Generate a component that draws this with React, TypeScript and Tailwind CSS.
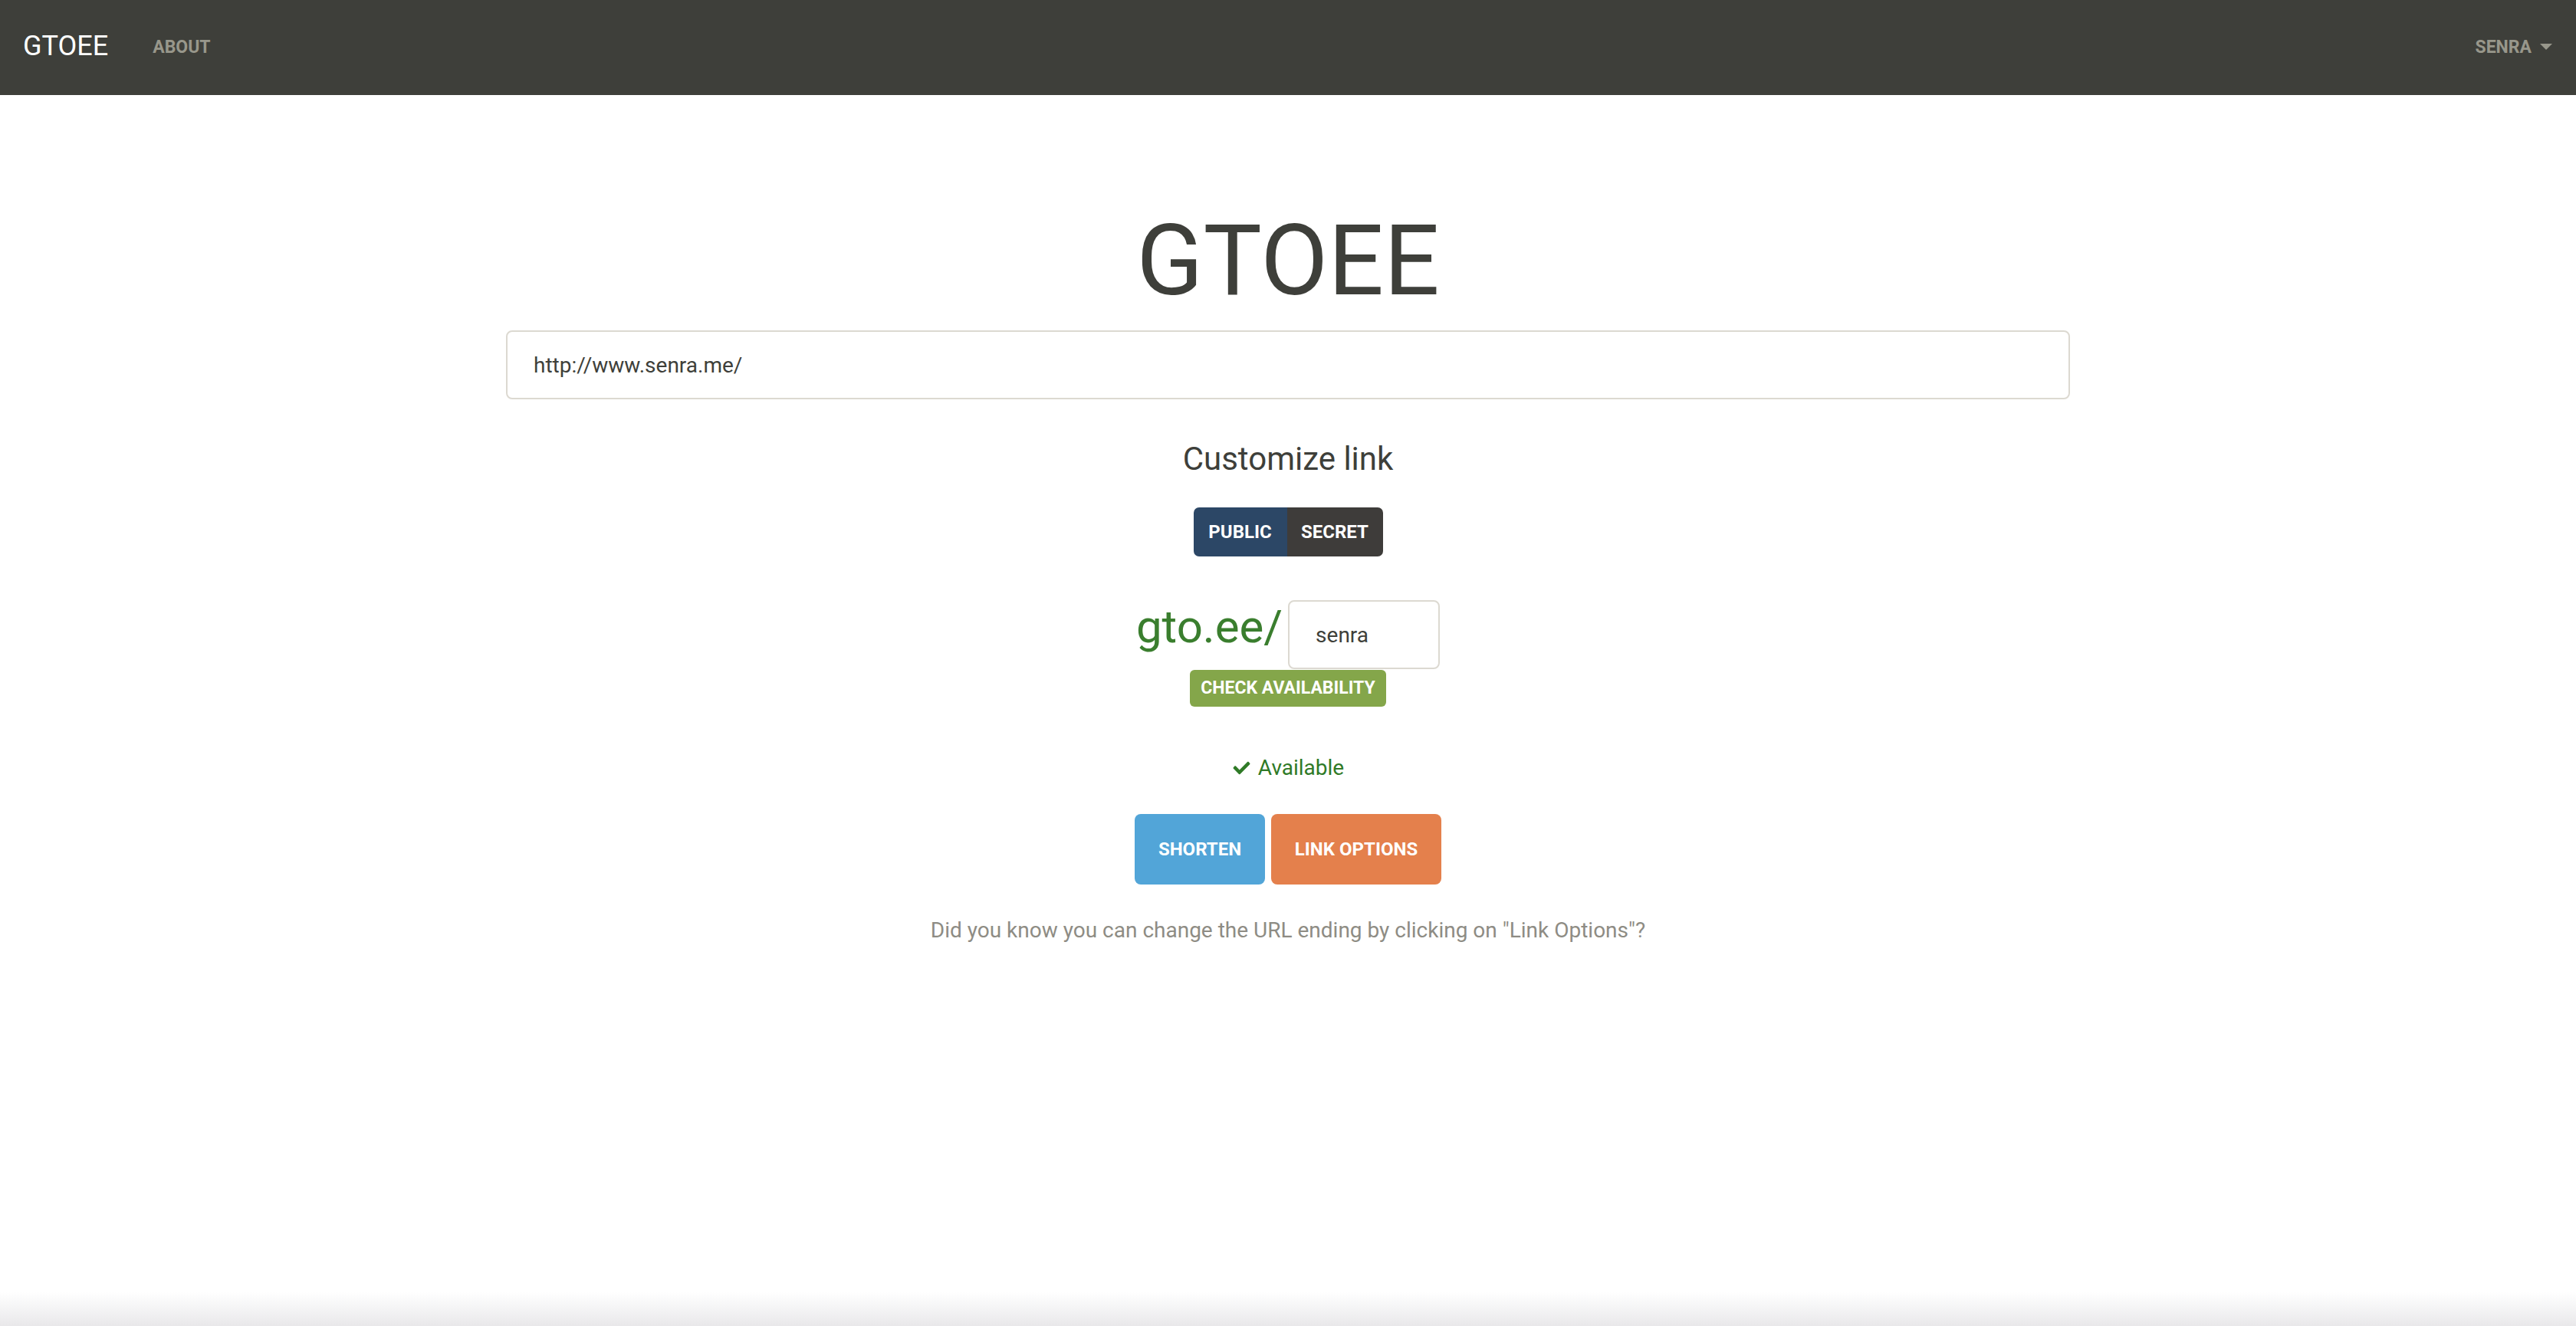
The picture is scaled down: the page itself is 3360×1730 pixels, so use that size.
import { FaCheck } from 'react-icons/fa';

function Navbar() {
  return (
    <nav className="h-[124px] bg-[#3e3f3a] flex items-center justify-between pl-[30px] pr-[31px] pb-[5px]">
      <div className="flex items-center gap-[58px]">
        <span className="text-[36px] leading-none text-white">GTOEE</span>
        <span className="text-[23px] font-bold leading-none text-[#98978b] pt-[3px]">ABOUT</span>
      </div>
      <div className="flex items-center gap-[11px] pt-[3px]">
        <span className="text-[23px] font-bold leading-none text-[#98978b]">SENRA</span>
        <span className="w-0 h-0 border-l-[8px] border-r-[8px] border-t-[8px] border-l-transparent border-r-transparent border-t-[#98978b]" />
      </div>
    </nav>
  );
}

export default function App() {
  return (
    <div className="min-h-screen flex flex-col bg-white font-[Roboto,sans-serif]">
      <Navbar />

      <main className="flex-1 flex flex-col items-center">
        <h1 className="mt-[152px] text-[128px] leading-none font-normal text-[#3e3f3a]">GTOEE</h1>

        <input
          readOnly
          defaultValue="http://www.senra.me/"
          className="mt-[27px] w-[2040px] h-[90px] pl-[34px] text-[28px] text-[#3e3f3a] bg-white border-2 border-[#dcd9d1] rounded-[8px] outline-none"
        />

        <h3 className="mt-[57px] text-[42px] leading-none font-normal text-[#3e3f3a]">Customize link</h3>

        {/* public / secret toggle */}
        <div className="mt-[42px] flex h-[64px] rounded-[7px] overflow-hidden">
          <button className="w-[122px] flex items-center justify-center bg-[#2c4766] text-white text-[24px] font-bold">
            PUBLIC
          </button>
          <button className="w-[125px] flex items-center justify-center bg-[#3e3c3a] text-white text-[24px] font-bold">
            SECRET
          </button>
        </div>

        <div className="mt-[57px] flex items-baseline gap-[7px]">
          <span className="text-[60px] leading-none text-[#3a7e2e]">gto.ee/</span>
          <input
            readOnly
            defaultValue="senra"
            className="w-[198px] h-[90px] pl-[34px] text-[28px] text-[#3e3f3a] bg-white border-2 border-[#dcd9d1] rounded-[8px] outline-none"
          />
        </div>
        <button className="mt-[1px] w-[256px] h-[48px] rounded-[6px] bg-[#84a64a] text-white text-[23px] font-bold">
          CHECK AVAILABILITY
        </button>

        <div className="mt-[66px] flex items-center gap-[9px] text-[#2f7a27]">
          <FaCheck className="w-[25px] h-[22px]" />
          <span className="text-[28px] leading-none">Available</span>
        </div>

        <div className="mt-[46px] flex gap-[8px]">
          <button className="w-[170px] h-[92px] rounded-[8px] bg-[#52a5d8] text-white text-[24px] font-bold">
            SHORTEN
          </button>
          <button className="w-[222px] h-[92px] rounded-[8px] bg-[#e4804c] text-white text-[24px] font-bold">
            LINK OPTIONS
          </button>
        </div>

        <p className="mt-[46px] text-[28px] leading-none text-[#8e8c84]">
          Did you know you can change the URL ending by clicking on "Link Options"?
        </p>
      </main>

      <div className="h-[44px] bg-gradient-to-b from-white to-[#e9e8ea]" />
    </div>
  );
}
